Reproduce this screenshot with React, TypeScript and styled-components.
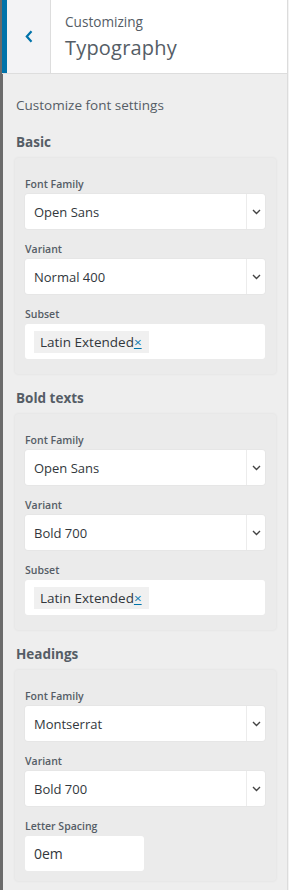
import React from "react";
import styled, { createGlobalStyle } from "styled-components";

const Global = createGlobalStyle`
  html, body { margin: 0; padding: 0; background: #eeeeee; }
  body { font-family: "Open Sans", "Noto Sans", sans-serif; color: #555d66; }
  * { box-sizing: border-box; }
`;

const Frame = styled.div`
  width: 289px;
  height: 890px;
  display: flex;
  overflow: hidden;
`;

const LeftEdge = styled.div`
  width: 2px;
  flex: none;
  background: #6b6b6b;
`;

const RightEdge = styled.div`
  width: 2px;
  flex: none;
  background: #f3f3f3;
  border-left: 1px solid #dcdcdc;
`;

const Panel = styled.div`
  flex: 1;
  min-width: 0;
  display: flex;
  flex-direction: column;
  background: #eeeeee;
`;

const Header = styled.div`
  flex: none;
  height: 74px;
  display: flex;
  background: #fff;
  border-bottom: 1px solid #dddddd;
`;

const BackButton = styled.div`
  width: 49px;
  flex: none;
  display: flex;
  align-items: center;
  justify-content: center;
  background: #f3f3f5;
  border-left: 5px solid #0073aa;
  border-right: 1px solid #dddddd;
  color: #0073aa;
`;

const Titles = styled.div`
  padding: 12px 0 0 14px;
  display: flex;
  flex-direction: column;
  gap: 2px;
`;

const Kicker = styled.span`
  font-size: 13.6px;
  line-height: 20px;
  color: #555d66;
`;

const Title = styled.span`
  font-size: 20px;
  line-height: 28px;
  color: #555d66;
  letter-spacing: 0.2px;
`;

const Body = styled.div`
  border-left: 1px solid #6b6b6b;
  padding: 22px 11px 0 12px;
  display: flex;
  flex-direction: column;
  flex: 1;
  & > * {
    flex-shrink: 0;
  }
`;

const Description = styled.p`
  margin: 0 0 18px 1px;
  font-size: 13.5px;
  line-height: 18px;
  color: #555d66;
`;

const SectionTitle = styled.h3`
  margin: 0 0 6px 1px;
  font-size: 13.5px;
  line-height: 20px;
  font-weight: 700;
  color: #555d66;
`;

const Box = styled.div`
  background: #ebebeb;
  border-radius: 3px;
  box-shadow: 0 0 3px rgba(0, 0, 0, 0.07);
  padding: 18px 11px 10px 10px;
  margin-bottom: 14px;
  display: flex;
  flex-direction: column;
  gap: 12px;
`;

const Field = styled.div<{ $tail?: number }>`
  display: flex;
  flex-direction: column;
  gap: 2px;
  margin-bottom: ${(p) => p.$tail ?? 0}px;
`;

const Label = styled.label`
  font-size: 10.5px;
  line-height: 16px;
  font-weight: 600;
  color: #555d66;
`;

const SelectBox = styled.div`
  height: 35px;
  background: #fff;
  border-radius: 3px;
  display: flex;
  align-items: stretch;
  box-shadow: 0 0 0 1px rgba(0, 0, 0, 0.02);
`;

const SelectValue = styled.div`
  flex: 1;
  display: flex;
  align-items: center;
  padding-left: 9px;
  font-size: 13px;
  color: #32373c;
`;

const Arrow = styled.div`
  width: 19px;
  flex: none;
  border-left: 1px solid #ececec;
  display: flex;
  align-items: center;
  justify-content: center;
  color: #444;
`;

const MultiBox = styled.div<{ $narrow?: boolean }>`
  height: 35px;
  width: ${(p) => (p.$narrow ? "119px" : "auto")};
  background: #fff;
  border-radius: 3px;
  display: flex;
  align-items: center;
  padding-left: ${(p) => (p.$narrow ? "9px" : "9px")};
  font-size: 14px;
  color: #32373c;
`;

const Tag = styled.span`
  display: inline-flex;
  align-items: center;
  height: 22px;
  padding: 0 7px 0 6px;
  background: #f0f0f0;
  font-size: 13.5px;
  color: #32373c;
`;

const Remove = styled.span`
  color: #0073aa;
  text-decoration: underline;
  font-size: 13.5px;
`;

const Chevron = () => (
  <svg width="9" height="6" viewBox="0 0 9 6" fill="none">
    <path d="M1 1l3.5 3.5L8 1" stroke="#444" strokeWidth="1.4" />
  </svg>
);

const BackIcon = () => (
  <svg width="8" height="13" viewBox="0 0 8 13" fill="none">
    <path d="M6.5 1.2L1.8 6.5l4.7 5.3" stroke="#0073aa" strokeWidth="2.2" />
  </svg>
);

const Select = ({ value }: { value: string }) => (
  <SelectBox>
    <SelectValue>{value}</SelectValue>
    <Arrow>
      <Chevron />
    </Arrow>
  </SelectBox>
);

const Subset = () => (
  <MultiBox>
    <Tag>
      Latin Extended<Remove>×</Remove>
    </Tag>
  </MultiBox>
);

export default function App() {
  return (
    <>
      <Global />
      <Frame>
        <LeftEdge />
        <Panel>
          <Header>
            <BackButton>
              <BackIcon />
            </BackButton>
            <Titles>
              <Kicker>Customizing</Kicker>
              <Title>Typography</Title>
            </Titles>
          </Header>
          <Body>
            <Description>Customize font settings</Description>

            <SectionTitle>Basic</SectionTitle>
            <Box>
              <Field>
                <Label>Font Family</Label>
                <Select value="Open Sans" />
              </Field>
              <Field>
                <Label>Variant</Label>
                <Select value="Normal 400" />
              </Field>
              <Field $tail={5}>
                <Label>Subset</Label>
                <Subset />
              </Field>
            </Box>

            <SectionTitle>Bold texts</SectionTitle>
            <Box>
              <Field>
                <Label>Font Family</Label>
                <Select value="Open Sans" />
              </Field>
              <Field>
                <Label>Variant</Label>
                <Select value="Bold 700" />
              </Field>
              <Field $tail={5}>
                <Label>Subset</Label>
                <Subset />
              </Field>
            </Box>

            <SectionTitle>Headings</SectionTitle>
            <Box>
              <Field>
                <Label>Font Family</Label>
                <Select value="Montserrat" />
              </Field>
              <Field>
                <Label>Variant</Label>
                <Select value="Bold 700" />
              </Field>
              <Field>
                <Label>Letter Spacing</Label>
                <MultiBox $narrow>0em</MultiBox>
              </Field>
            </Box>
          </Body>
        </Panel>
        <RightEdge />
      </Frame>
    </>
  );
}
